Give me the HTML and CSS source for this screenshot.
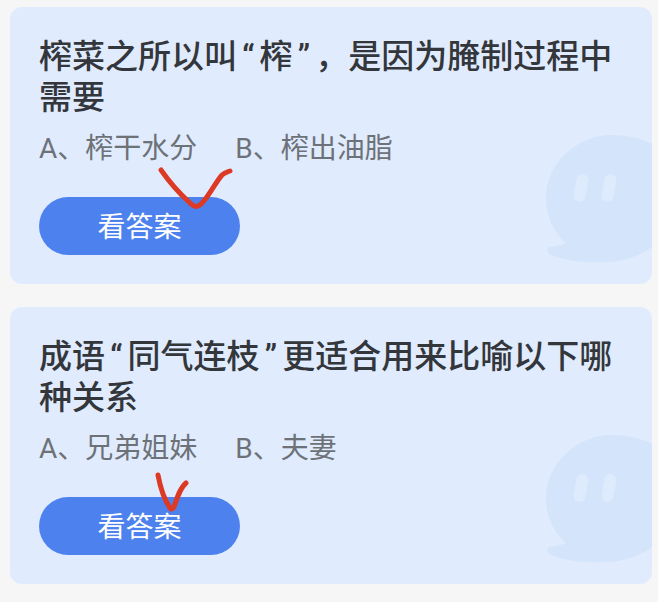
FILE: index.html
```html
<!DOCTYPE html>
<html>
    <head>
        <title>蚂蚁庄园</title>
        <meta charset="UTF-8">
        <link rel="stylesheet" href="styles.css">
    </head>
    <body>
        <div class="card">
            <svg class="bubble" width="106" height="128" viewBox="0 0 106 128">
                <path class="bubble-body" d="M65 0C32 0 0 28 0 63C0 83 9 98 20 108C14 111 8 111 4 112C-1 114 1 118 6 120C22 127 45 128 62 127C80 126 95 120 106 112V9C95 3 80 0 65 0Z"/>
                <rect class="bubble-eye" x="29" y="39" width="12" height="28" rx="6" transform="rotate(10 35 53)"/>
                <rect class="bubble-eye" x="57" y="39" width="12" height="28" rx="6" transform="rotate(10 63 53)"/>
            </svg>
            <h2 class="question">榨菜之所以叫<span class="quote">“</span>榨<span class="quote">”</span>，是因为腌制过程中<br>需要</h2>
            <div class="options">
                <span class="option">A、榨干水分</span>
                <span class="option">B、榨出油脂</span>
            </div>
            <div class="btn">看答案</div>
            <svg class="tick tick-first" width="80" height="48" viewBox="0 0 80 48">
                <path d="M3 3C10 13 21 26 31 35C36 40 39 41 43 37C50 31 57 16 64 8C67 5 69 5 72 4"/>
            </svg>
        </div>
        <div class="card">
            <svg class="bubble" width="106" height="128" viewBox="0 0 106 128">
                <path class="bubble-body" d="M65 0C32 0 0 28 0 63C0 83 9 98 20 108C14 111 8 111 4 112C-1 114 1 118 6 120C22 127 45 128 62 127C80 126 95 120 106 112V9C95 3 80 0 65 0Z"/>
                <rect class="bubble-eye" x="29" y="39" width="12" height="28" rx="6" transform="rotate(10 35 53)"/>
                <rect class="bubble-eye" x="57" y="39" width="12" height="28" rx="6" transform="rotate(10 63 53)"/>
            </svg>
            <h2 class="question">成语<span class="quote">“</span>同气连枝<span class="quote">”</span>更适合用来比喻以下哪<br>种关系</h2>
            <div class="options">
                <span class="option">A、兄弟姐妹</span>
                <span class="option">B、夫妻</span>
            </div>
            <div class="btn">看答案</div>
            <svg class="tick tick-second" width="40" height="44" viewBox="0 0 40 44">
                <path d="M4 3C6 14 10 27 16 36C17 38 19 37 20 35C23 26 26 16 32 11"/>
            </svg>
        </div>
    </body>
</html>
```

FILE: styles.css
```css
body {
    margin: 0;
    padding: 7px 6px 18px 10px;
    background-color: #f6f6f7;
    font-family: "Noto Sans CJK SC", "Noto Sans", sans-serif;
    display: flex;
    flex-direction: column;
    gap: 23px;
}

.card {
    position: relative;
    overflow: hidden;
    height: 277px;
    box-sizing: border-box;
    padding: 27px 29px 0 29px;
    border-radius: 12px;
    background-color: #e0ebfd;
}

.question {
    position: relative;
    margin: 0;
    font-size: 33px;
    font-weight: 500;
    line-height: 41px;
    color: #33363b;
}

/* narrow quotes, the phone font doesn't give them a full square */
.quote {
    font-family: "Roboto", sans-serif;
    line-height: 1;
    padding: 0 5px;
}

.options {
    position: relative;
    display: flex;
    gap: 38px;
    margin-top: 13px;
    font-family: "Roboto", "Noto Sans CJK SC", sans-serif;
    font-size: 28px;
    line-height: 40px;
    color: #6d7278;
}

.btn {
    position: relative;
    width: 201px;
    height: 58px;
    margin-top: 28px;
    border-radius: 29px;
    background-color: #4d82ee;
    color: white;
    font-size: 28px;
    line-height: 57px;
    text-align: center;
}

.bubble {
    position: absolute;
    right: 0;
    top: 128px;
}

.bubble-body {
    fill: #d4e4fa;
}

.bubble-eye {
    fill: #deebfc;
}

.tick {
    position: absolute;
    fill: none;
    stroke: #dd3a26;
    stroke-width: 5px;
    stroke-linecap: round;
    stroke-linejoin: round;
}

.tick-first {
    left: 148px;
    top: 160px;
}

.tick-second {
    left: 144px;
    top: 165px;
}
```
